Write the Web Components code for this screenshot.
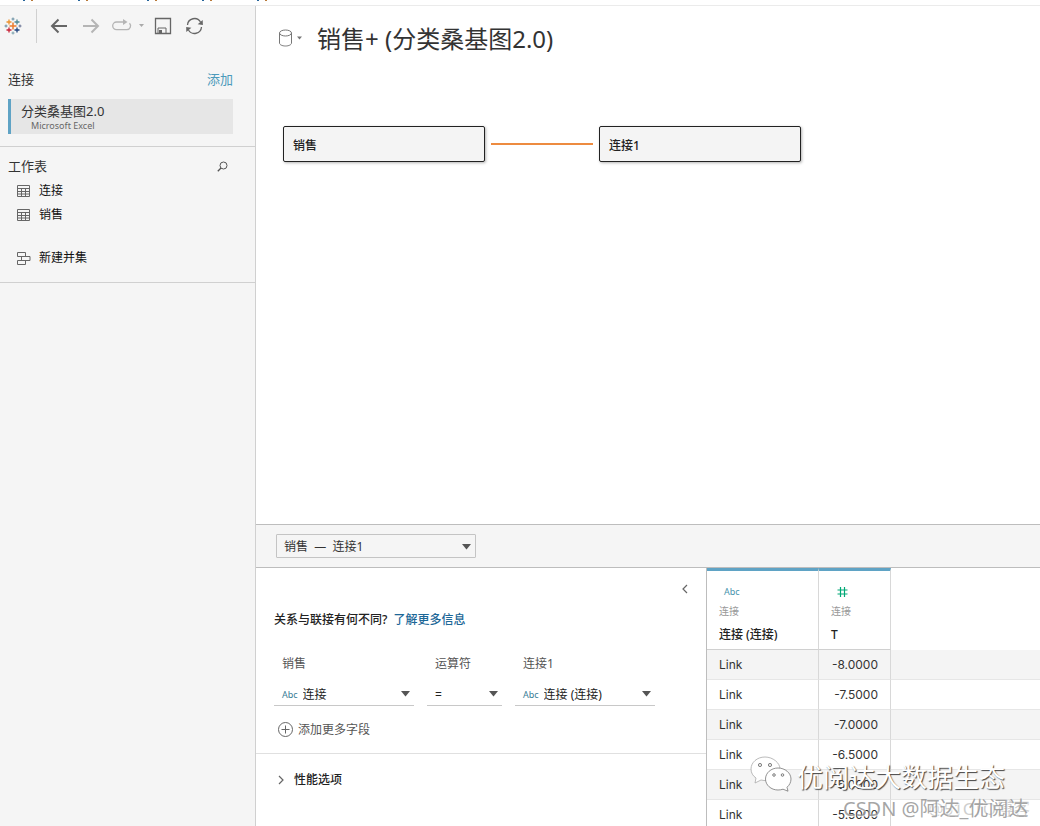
<!DOCTYPE html>
<html lang="zh-CN">
<head>
<meta charset="utf-8">
<title>销售+ (分类桑基图2.0)</title>
<style>
html,body{height:100%}
body{margin:0;font:12px/24px "Noto Sans","Noto Sans CJK SC",sans-serif;color:#333;background:#fff}
</style>
</head>
<body>
<data-source-page></data-source-page>

<template id="t-page">
<style>
:host{display:flex;flex-direction:column;height:100vh;overflow:hidden;position:relative}
main{display:grid;grid-template-columns:256px minmax(0,1fr);flex:1;min-height:0}
.work{display:flex;flex-direction:column;min-width:0;min-height:0}
relation-canvas{flex:1}
.bottom{display:flex;flex-direction:column;flex:0 0 302px;overflow:hidden}
.panes{display:flex;flex:1;min-height:0}
data-grid{flex:1}
</style>
<menu-edge></menu-edge>
<main>
<side-bar>
<connection-card slot="connection" name="分类桑基图2.0">Microsoft Excel</connection-card>
<sheet-row slot="sheets" icon="table">连接</sheet-row>
<sheet-row slot="sheets" icon="table">销售</sheet-row>
<sheet-row slot="union" icon="union">新建并集</sheet-row>
</side-bar>
<div class="work">
<relation-canvas>
<table-node>销售</table-node><relation-line></relation-line><table-node>连接1</table-node>
</relation-canvas>
<div class="bottom">
<relation-bar></relation-bar>
<div class="panes"><relation-form></relation-form><data-grid></data-grid></div>
</div>
</div>
</main>
<water-mark></water-mark>
</template>

<template id="t-menu">
<style>
:host{display:flex;height:6px;border-bottom:1px solid #ebebeb;padding-left:23px;gap:45px;box-sizing:border-box;flex:none}
i{display:flex;justify-content:space-between;width:10px;height:1px}
i:nth-of-type(3){margin-left:14px}
i::before,i::after{content:"";width:2px;background:#27659b}
i::after{background:#b97a3a}
</style>
<i></i><i></i><i></i><i></i><i></i>
</template>

<template id="t-side">
<style>
:host{display:block;background:#f5f5f5;border-right:1px solid #d0d0d0}
button{border:0;padding:0;background:none;font:inherit;color:inherit;display:block}
svg{display:block}
.tools{display:flex;align-items:center;height:40px;padding-left:4px}
.tools hr{border:0;width:1px;height:34px;background:#d0d0d0;margin:0 13px 0 14px}
.tools button+button{margin-left:12px}
.tools button+button.wide{margin-left:14px}
.tools button+button.more{margin-left:6px}
.tools button+button.save{margin-left:8px}
section{padding:0 22px 0 8px;border-bottom:1px solid #d0d0d0;box-sizing:border-box}
.conn{padding-top:21px;height:101px}
header{display:flex;justify-content:space-between;align-items:center;font-size:13px}
h2{font:inherit;margin:0}
a{color:#4c9abb;text-decoration:none}
.conn header{margin-bottom:8px}
.sheets{padding-top:7px;height:136px}
.sheets header{margin-bottom:1px}
.sheets button{margin-right:5px}
.union{margin-top:19px}
</style>
<nav class="tools">
<svg width="18" height="18" viewBox="0 0 18 18" fill="none" role="img" aria-label="Tableau"><g stroke-width="1.300"><path stroke="#eb7a2b" stroke-width="1.500" d="M9 5.500v7M5.500 9h7"/><path stroke="#eb912c" d="M5 2.500v5M2.500 5h5"/><path stroke="#4e8793" d="M13 2.500v5M10.500 5h5"/><path stroke="#c72035" d="M5 10.500v5M2.500 13h5"/><path stroke="#1f447e" d="M13 10.500v5M10.500 13h5"/></g><g stroke-width=".9"><path stroke="#5b879b" d="M9 .5v3M7.500 2h3M2 7.500v3M.5 9h3"/><path stroke="#59658a" d="M16 7.500v3M14.500 9h3"/><path stroke="#7099a6" d="M9 14.500v3M7.500 16h3"/></g></svg>
<hr>
<button aria-label="后退"><svg width="18" height="16" viewBox="0 0 18 16" fill="none" stroke="#666" stroke-width="2"><path d="M17 8H2M8.500 1.500 2 8l6.500 6.500"/></svg></button>
<button aria-label="前进" class="wide"><svg width="18" height="16" viewBox="0 0 18 16" fill="none" stroke="#b5b5b5" stroke-width="2"><path d="M1 8h15M9.500 1.500 16 8l-6.500 6.500"/></svg></button>
<button aria-label="重做"><svg width="20" height="14" viewBox="0 0 20 14" fill="none" stroke="#b5b5b5" stroke-width="1.300"><path d="M13 3H4.500a3.800 3.800 0 0 0 0 7.600h10.500a3.700 3.700 0 0 0 2.500-6.300"/><path fill="#b5b5b5" stroke="none" d="m11 0 4.500 3L11 6z"/></svg></button>
<button class="more" aria-label="更多"><svg width="8" height="4" viewBox="0 0 8 4"><path fill="#aaa" d="M1 0h5L3.500 3z"/></svg></button>
<button class="save" aria-label="保存"><svg width="18" height="18" viewBox="0 0 18 18" fill="none" stroke="#666"><path stroke-width="1.300" d="M1.500 1.500h15v15h-15z"/><path d="M4 16v-5h8v5"/><path fill="#666" stroke="none" d="M5 13h3v3H5z"/></svg></button>
<button aria-label="刷新" class="wide"><svg width="18" height="18" viewBox="0 0 18 18" fill="none" stroke="#666" stroke-width="1.300"><path d="M1.500 8A7 7 0 0 1 14.500 5M15.500 10A7 7 0 0 1 2.500 13"/><path fill="#666" stroke="none" d="m16.700 3 .2 5-5.200-.8zM.3 15l-.1-5 5.200.8z"/></svg></button>
</nav>
<section class="conn"><header><h2>连接</h2><a href="#add">添加</a></header><slot name="connection"></slot></section>
<section class="sheets"><header><h2>工作表</h2><button aria-label="搜索"><svg width="11" height="11" viewBox="0 0 11 11" fill="none" stroke="#555"><circle cx="6.500" cy="4.500" r="3.500"/><path stroke-width="1.300" d="M4 7 .8 10.200"/></svg></button></header>
<slot name="sheets"></slot><div class="union"><slot name="union"></slot></div></section>
</template>

<template id="t-card">
<style>
:host{display:block;background:#e6e6e6;border-left:3px solid #5fa3c5;padding:4px 0 0 10px;height:31px;font-size:13px;line-height:16px}
small{display:block;font-size:9px;line-height:14px;color:#666;padding-left:10px}
</style>
<div id="n"></div><small><slot></slot></small>
</template>

<template id="t-row">
<style>
:host{display:flex;align-items:center;height:24px;padding-left:9px;color:#111}
svg{display:none}
span{flex:none}
.icon{width:22px}
:host([icon=table]) .table,:host([icon=union]) .union{display:block}
</style>
<span class="icon"><svg class="table" width="13" height="12" viewBox="0 0 13 12" fill="none" stroke="#666"><path d="M.5.500h12v11H.5zM.5 3.500h12M.5 6.500h12M.5 9h12M4.500 3v8.500M8.500 3v8.500"/></svg>
<svg class="union" width="14" height="13" viewBox="0 0 14 13" fill="none" stroke="#666"><path d="M.5.500h8v4h-8zM4.500 4.500h8.500v4H4.500zM.5 8.500h8v4h-8z"/></svg></span>
<span><slot></slot></span>
</template>

<template id="t-canvas">
<style>
:host{display:block;min-height:0;background:#fff}
header{display:flex;align-items:center;height:34px;padding:16px 0 0 22px}
button{border:0;padding:0;background:none;display:flex;align-items:center;gap:4px}
svg{margin-bottom:2px}
h1{font-weight:400;font-size:24px;line-height:34px;margin:0 0 0 14px;color:#333}
.flow{display:flex;align-items:center;gap:6px;padding:70px 0 0 27px}
</style>
<header><button aria-label="数据源"><svg width="15" height="18" viewBox="0 0 15 18" fill="none" stroke="#777"><ellipse cx="7.500" cy="4" rx="6" ry="3"/><path d="M1.500 4v10c0 1.700 2.700 3 6 3s6-1.300 6-3V4"/></svg><svg width="6" height="4" viewBox="0 0 6 4"><path fill="#777" d="M0 .5h5L2.500 3.500z"/></svg></button><h1>销售+ (分类桑基图2.0)</h1></header>
<div class="flow"><slot></slot></div>
</template>

<template id="t-node">
<style>
:host{display:block}
button{display:block;width:202px;height:36px;box-sizing:border-box;padding:4px 9px 0;text-align:left;font:inherit;font-weight:500;line-height:24px;color:#222;background:#f4f4f4;border:1px solid #222;border-radius:2px;box-shadow:1px 1px 3px rgba(0,0,0,.3)}
</style>
<button><slot></slot></button>
</template>

<template id="t-line"><style>:host{display:block;width:102px;height:2px;background:#ed8b40}</style></template>

<template id="t-bar">
<style>
:host{display:flex;align-items:center;height:42px;background:#f5f5f5;border:solid #bdbdbd;border-width:1px 0;padding-left:20px;flex:none}
div{position:relative}
select{appearance:none;display:block;width:200px;height:24px;border:1px solid #c4c4c4;border-radius:1px;background:#f5f5f5;padding:2px 20px 0 7px;font:inherit;line-height:20px;color:#333}
svg{position:absolute;right:5px;top:10px;pointer-events:none}
</style>
<div><select aria-label="关系"><option>销售&nbsp; —&nbsp; 连接1</option></select><svg width="9" height="6"><path fill="#555" d="M0 0h9L4.500 5.500z"/></svg></div>
</template>

<template id="t-form">
<style>
:host{display:block;flex:0 0 450px;box-sizing:border-box;background:#fff}
button{border:0;padding:0;background:none;font:inherit;color:inherit;display:flex;align-items:center}
.close{margin:12px 17px 0 auto;height:18px}
h3{font:inherit;font-weight:500;margin:10px 0 0 18px;color:#222}
a{color:#1c6797;text-decoration:none;margin-left:6px}
.fields{display:flex;margin:20px 0 0 18px;gap:13px}
.add{margin:12px 0 0 22px;gap:4px;color:#555}
.perf{border-top:1px solid #e0e0e0;margin-top:11px;padding:14px 0 0 22px}
.perf button{gap:9px;font-weight:500;color:#222}
</style>
<button class="close" aria-label="折叠"><svg width="8" height="10" viewBox="0 0 8 10" fill="none" stroke="#666" stroke-width="1.200"><path d="M6 1 2 5l4 4"/></svg></button>
<h3>关系与联接有何不同?<a href="#more">了解更多信息</a></h3>
<div class="fields"><join-field label="销售" type="Abc" value="连接" style="width:140px"></join-field><join-field label="运算符" value="=" style="width:75px"></join-field><join-field label="连接1" type="Abc" value="连接 (连接)" style="width:140px"></join-field></div>
<button class="add"><svg width="16" height="16" viewBox="0 0 16 16" fill="none" stroke="#666"><circle cx="7.500" cy="7.500" r="7"/><path d="M3.500 7.500h8M7.500 3.500v8"/></svg>添加更多字段</button>
<div class="perf"><button aria-expanded="false"><svg width="7" height="10" viewBox="0 0 7 10" fill="none" stroke="#666" stroke-width="1.200"><path d="m1 1 4 4-4 4"/></svg>性能选项</button></div>
</template>

<template id="t-field">
<style>
:host{display:block}
label{display:block;padding-left:8px;color:#555}
div{display:flex;align-items:center;box-sizing:border-box;margin-top:6px;height:24px;padding:2px 0 0 8px;border-bottom:1px solid #c8c8c8;position:relative}
span{font-size:9px;color:#387d96;margin-right:5px}
span:empty{display:none}
select{appearance:none;border:0;background:none;padding:0;flex:1;min-width:0;height:20px;font:inherit;line-height:20px;color:#222}
svg{position:absolute;right:4px;top:9px;pointer-events:none}
</style>
<label for="s"></label><div><span></span><select id="s"><option></option></select><svg width="9" height="6"><path fill="#555" d="M0 0h9L4.500 5.500z"/></svg></div>
</template>

<template id="t-grid">
<style>
:host{display:block;min-width:0;border-left:1px solid #bdbdbd;background:#fff;overflow:hidden}
table{border-collapse:separate;border-spacing:0;width:100%;table-layout:fixed}
col.a{width:112px}col.b{width:72px}
th{border-top:3px solid #5fa3c5;border-bottom:1px solid #d0d0d0;border-right:1px solid #d8d8d8;box-sizing:border-box;height:82px;padding:9px 0 0 12px;text-align:left;vertical-align:top;font-weight:500;color:#222}
th small{display:flex;align-items:center;height:24px;font-size:9px;font-weight:400;color:#4793ad;padding-left:5px}
th em{display:block;font-style:normal;font-weight:400;font-size:10px;line-height:14px;color:#999;margin-bottom:7px}
th b{display:block;font-weight:500;line-height:20px}
td{height:30px;box-sizing:border-box;padding:0 12px;border-right:1px solid #d8d8d8;border-bottom:1px solid #e6e6e6;font:12px/29px Inter,"Noto Sans CJK SC",sans-serif;color:#333}
td:nth-child(2){text-align:right}
td:nth-child(3){border-right:0}
tbody tr:nth-child(odd) td{background:#f4f4f4}
thead td{border:0}
</style>
<table><colgroup><col class="a"><col class="b"><col></colgroup>
<thead><tr><th><small>Abc</small><em>连接</em><b>连接 (连接)</b></th><th><small><svg width="13" height="12" viewBox="0 0 13 12" fill="none" stroke="#00a876" stroke-width="1.200" role="img" aria-label="数字"><path d="M4.500 1v10M8.500 1v10M1.500 4h10M1.500 8h10"/></svg></small><em>连接</em><b>T</b></th><td></td></tr></thead>
<tbody></tbody></table>
</template>

<template id="t-mark">
<style>
:host{position:absolute;right:10px;bottom:4px;width:280px;pointer-events:none;white-space:nowrap}
.brand{display:flex;align-items:center;gap:5px;color:#fff;font-size:26px;line-height:30px;text-shadow:1px 1px 1px #444}
.by{position:relative;font-size:20px;line-height:26px;color:rgba(150,150,150,.85);padding-left:93px}
.site{position:absolute;right:0;top:0;font-size:17px;line-height:26px;color:rgba(185,185,185,.7)}
.by span{position:relative;text-shadow:1px 1px 0 rgba(255,255,255,.7)}
svg{margin-bottom:4px}
.brand span{padding-top:1px}
</style>
<div class="brand"><svg width="42" height="36" viewBox="0 0 42 36" fill="#fff" stroke="#777" stroke-width=".8"><path stroke="#aaa" d="M15 1C7 1 1 6.500 1 13c0 4 2 7 5 9l-1 5 6-3c2 .5 4 .7 6 .4C26 24 30 19 30 13S23 1 15 1z"/><path d="M28 12c-7 0-12.500 5-12.500 11S21 34 28 34c2 0 3.500-.3 5-.8l5 2-1-4c2.500-2 4-5 4-8.200 0-6-6-11-13-11z"/><g fill="#eee" stroke="#666"><circle cx="10" cy="9" r="1.600"/><circle cx="20" cy="9" r="1.600"/><circle cx="24" cy="19" r="1.300"/><circle cx="32.500" cy="19" r="1.300"/></g></svg><span>优阅达大数据生态</span></div>
<div class="by"><div class="site">@51CTO博客</div><span>CSDN @阿达_优阅达</span></div>
</template>

<script>
const define = (name, template, setup) => customElements.define(name, class extends HTMLElement {
  constructor() {
    super();
    this.attachShadow({mode: 'open'}).append(document.getElementById(template).content.cloneNode(true));
  }
  connectedCallback() { if (setup) setup(this, this.shadowRoot); }
});
define('menu-edge', 't-menu');
define('connection-card', 't-card', (el, root) => { root.getElementById('n').textContent = el.getAttribute('name'); });
define('sheet-row', 't-row');
define('side-bar', 't-side');
define('table-node', 't-node');
define('relation-line', 't-line');
define('relation-canvas', 't-canvas');
define('relation-bar', 't-bar');
define('join-field', 't-field', (el, root) => {
  root.querySelector('label').textContent = el.getAttribute('label');
  root.querySelector('span').textContent = el.getAttribute('type') || '';
  root.querySelector('option').textContent = el.getAttribute('value');
});
define('relation-form', 't-form');
define('data-grid', 't-grid', (el, root) => {
  root.querySelector('tbody').innerHTML = ['-8.0000', '-7.5000', '-7.0000', '-6.5000', '-6.0000', '-5.5000']
    .map(v => `<tr><td>Link</td><td>${v}</td><td></td></tr>`).join('');
});
define('water-mark', 't-mark');
define('data-source-page', 't-page');
</script>
</body>
</html>
